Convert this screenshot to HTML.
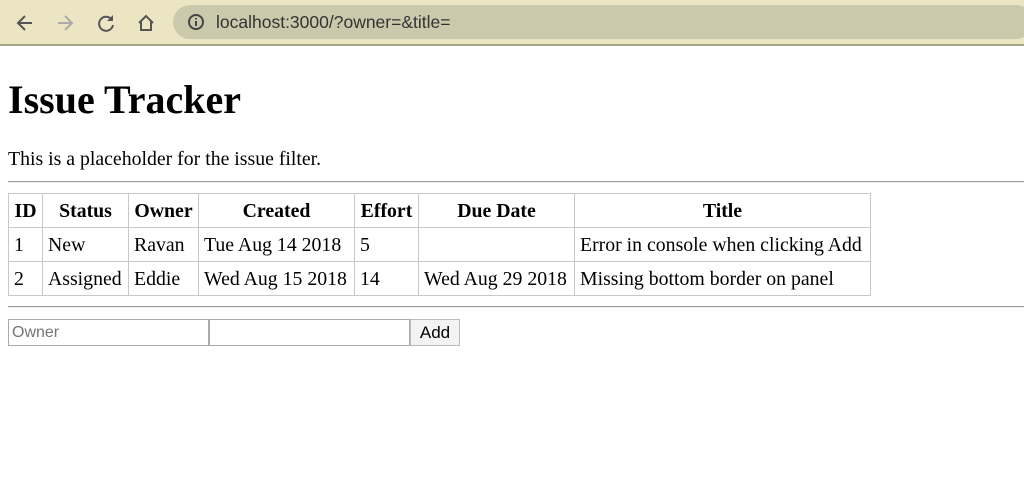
<!DOCTYPE html>
<html><head><style>
body{margin:0;width:1024px;height:488px;overflow:hidden;background:#fff;font-family:"Liberation Serif",serif;font-size:19.8px;position:relative}
.bar{position:absolute;left:0;top:0;width:1024px;height:44px;background:#ece5c3;border-bottom:2px solid #a7a387}
.url{position:absolute;left:173px;top:5px;width:860px;height:34px;border-radius:17px;background:#cbc9ab}
.url span{position:absolute;left:43px;top:7px;font-family:"Liberation Sans",sans-serif;font-size:17.5px;color:#333}
.ico{position:absolute;top:12px}
h1{position:absolute;left:8px;top:76px;margin:0;font-size:40px;font-weight:bold}
p{position:absolute;left:8px;top:148px;margin:0}
hr{position:absolute;left:8px;width:1016px;margin:0;border:0;border-top:1px solid #9a9a9a;border-bottom:1px solid #eee;height:0}
table{position:absolute;left:8px;top:193px;border-collapse:collapse;table-layout:fixed}
td,th{border:1px solid #c8c8c8;height:32px;box-sizing:border-box;padding:1px 5px 0;white-space:nowrap;line-height:22px}
th{text-align:center}
input{position:absolute;top:319px;height:27px;box-sizing:border-box;border:1px solid #aaa;font-family:"Liberation Sans",sans-serif;font-size:16px;padding:0 3px;margin:0}
button{position:absolute;top:319px;left:410px;width:50px;height:27px;border:1px solid #bbb;background:#f3f3f3;font-family:"Liberation Sans",sans-serif;font-size:17px;padding:0}
</style></head><body>
<div class="bar">
<svg class="ico" style="left:14px" width="22" height="22" viewBox="0 0 22 22"><path d="M18 11H5M11 4l-7 7 7 7" stroke="#555" stroke-width="2" fill="none"/></svg>
<svg class="ico" style="left:54px" width="22" height="22" viewBox="0 0 22 22"><path d="M4 11h13M11 4l7 7-7 7" stroke="#aaa" stroke-width="2" fill="none"/></svg>
<svg class="ico" style="left:95px" width="22" height="22" viewBox="0 0 22 22"><path d="M17 8A7 7 0 1 0 18 13" stroke="#555" stroke-width="2" fill="none"/><path d="M18 3v6h-6z" fill="#555"/></svg>
<svg class="ico" style="left:135px" width="22" height="22" viewBox="0 0 22 22"><path d="M4 11L11 4l7 7M6 9v9h10V9" stroke="#555" stroke-width="2" fill="none"/></svg>
<div class="url"><svg style="position:absolute;left:14px;top:8px" width="18" height="18" viewBox="0 0 18 18"><circle cx="9" cy="9" r="7" stroke="#444" stroke-width="2" fill="none"/><path d="M9 8v5M9 5v1.5" stroke="#444" stroke-width="2"/></svg><span>localhost:3000/?owner=&amp;title=</span></div>
</div>
<h1>Issue Tracker</h1>
<p>This is a placeholder for the issue filter.</p>
<hr style="top:181px">
<table>
<colgroup><col style="width:34px"><col style="width:86px"><col style="width:70px"><col style="width:156px"><col style="width:64px"><col style="width:156px"><col style="width:296px"></colgroup>
<tr><th style="height:34px">ID</th><th>Status</th><th>Owner</th><th>Created</th><th>Effort</th><th>Due Date</th><th>Title</th></tr>
<tr><td style="height:34px">1</td><td>New</td><td>Ravan</td><td>Tue Aug 14 2018</td><td>5</td><td></td><td>Error in console when clicking Add</td></tr>
<tr><td style="height:34px">2</td><td>Assigned</td><td>Eddie</td><td>Wed Aug 15 2018</td><td>14</td><td>Wed Aug 29 2018</td><td>Missing bottom border on panel</td></tr>
</table>
<hr style="top:306px">
<input style="left:8px;width:201px" placeholder="Owner">
<input style="left:209px;width:201px">
<button>Add</button>
</body></html>
